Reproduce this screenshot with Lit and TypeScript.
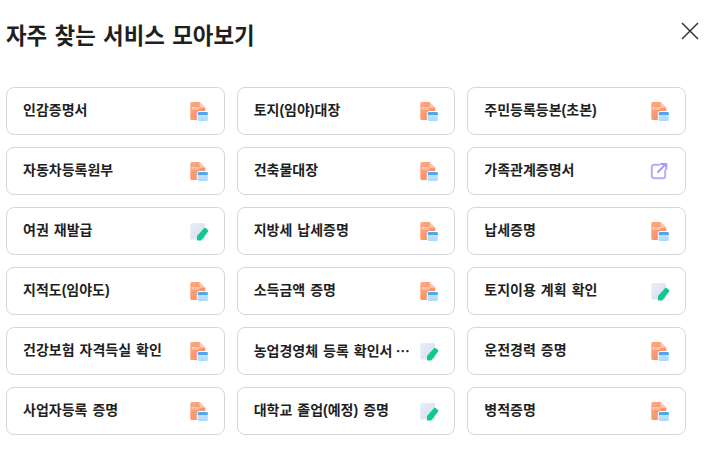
import { LitElement, html, css, svg } from 'lit';
import { customElement } from 'lit/decorators.js';

type Kind = 'pdf' | 'edit' | 'link';

const ITEMS: [string, Kind, boolean?][] = [
  ['인감증명서', 'pdf'],
  ['토지(임야)대장', 'pdf'],
  ['주민등록등본(초본)', 'pdf'],
  ['자동차등록원부', 'pdf'],
  ['건축물대장', 'pdf'],
  ['가족관계증명서', 'link'],
  ['여권 재발급', 'edit'],
  ['지방세 납세증명', 'pdf'],
  ['납세증명', 'pdf'],
  ['지적도(임야도)', 'pdf'],
  ['소득금액 증명', 'pdf'],
  ['토지이용 계획 확인', 'edit'],
  ['건강보험 자격득실 확인', 'pdf'],
  ['농업경영체 등록 확인서', 'edit', true],
  ['운전경력 증명', 'pdf'],
  ['사업자등록 증명', 'pdf'],
  ['대학교 졸업(예정) 증명', 'edit'],
  ['병적증명', 'pdf'],
];

const icons: Record<Kind, unknown> = {
  pdf: svg`
    <defs>
      <linearGradient id="doc" x1="0" y1="0" x2="1" y2="1">
        <stop offset="0" stop-color="#fdaa84"/>
        <stop offset="1" stop-color="#f9855a"/>
      </linearGradient>
      <linearGradient id="win" x1="0" y1="0" x2="0" y2="1">
        <stop offset="0" stop-color="#cdeafc"/>
        <stop offset="1" stop-color="#a5d8fb"/>
      </linearGradient>
    </defs>
    <path d="M1.300 2.500A1.500 1.500 0 0 1 2.800 1H10.500l5.800 5.800v10.700a1.500 1.500 0 0 1-1.500 1.500H2.800a1.500 1.500 0 0 1-1.500-1.500z" fill="url(#doc)"/>
    <path d="M10.500 1l5.800 5.800h-4.300a1.500 1.500 0 0 1-1.500-1.500z" fill="#fdc8ac"/>
    <text x="2.800" y="9" font-size="4" font-weight="700" fill="#ffe0d0" font-family="'Liberation Sans', sans-serif">PDF</text>
    <rect x="8.300" y="10.500" width="11" height="10" rx="1.800" fill="url(#win)" stroke="#fff" stroke-width="1"/>
    <path d="M8.800 12.300A1.300 1.300 0 0 1 10.100 11h7.400a1.300 1.300 0 0 1 1.300 1.300v1.700H8.800z" fill="#4fa8ee"/>`,
  edit: svg`
    <defs>
      <linearGradient id="paper" x1="0" y1="0" x2="1" y2="1">
        <stop offset="0" stop-color="#e9edf8"/>
        <stop offset="1" stop-color="#d6ddef"/>
      </linearGradient>
    </defs>
    <path d="M1.300 3.500A1.500 1.500 0 0 1 2.800 2h11.700A1.500 1.500 0 0 1 16 3.500V17a1.500 1.500 0 0 1-1.500 1.500H2.800A1.500 1.500 0 0 1 1.300 17z" fill="url(#paper)"/>
    <path d="M8 19.500V15L15 7.200a1.200 1.200 0 0 1 1.700-.1l2.200 2a1.200 1.200 0 0 1 .1 1.700L12.200 19.500z" fill="#10c98f"/>`,
  link: svg`
    <path d="M9.500 3.800H4.300A2.500 2.500 0 0 0 1.800 6.300V14.700A2.500 2.500 0 0 0 4.300 17.200h8.400a2.500 2.500 0 0 0 2.500-2.500V9.500" fill="none" stroke="#b9acf6" stroke-width="2" stroke-linecap="round"/>
    <path d="M8 11L15.500 3.300M11.300 3h5v5" fill="none" stroke="#ab9cf3" stroke-width="2" stroke-linecap="round" stroke-linejoin="round"/>`,
};

@customElement('app-root')
export class AppRoot extends LitElement {
  static styles = css`
    :host {
      display: block;
      box-sizing: border-box;
      width: 710px;
      height: 451px;
      padding: 0 24px 0 6px;
      background: #fff;
      color: #1f1f1f;
      font-family: 'Liberation Sans', 'Noto Sans CJK KR', sans-serif;
      word-spacing: 0.07em;
    }
    .head {
      display: flex;
      align-items: center;
      justify-content: space-between;
      height: 72px;
    }
    h2 {
      margin: 2px 0 0;
      font-size: 22.4px;
      font-weight: 700;
      line-height: 32px;
    }
    .close {
      display: block;
      width: 20px;
      height: 20px;
      margin: 0 -14px 10px 0;
    }
    .grid {
      display: grid;
      grid-template-columns: repeat(3, minmax(0, 1fr));
      gap: 12px;
      margin-top: 15px;
    }
    .card {
      box-sizing: border-box;
      display: flex;
      align-items: center;
      gap: 10px;
      height: 48px;
      padding: 0 15px 0 16px;
      border: 1px solid #d5d7dc;
      border-radius: 8px;
      background: #fff;
    }
    .label {
      flex: 1;
      min-width: 0;
      margin-bottom: 2px;
      white-space: nowrap;
      font-size: 14px;
      font-weight: 700;
      line-height: 20px;
    }
    .more {
      font-family: 'Noto Sans CJK KR', sans-serif;
      word-spacing: 0;
    }
    .icon {
      flex: none;
      width: 20px;
      height: 20px;
    }
  `;

  render() {
    return html`
      <div class="head">
        <h2>자주 찾는 서비스 모아보기</h2>
        <svg class="close" viewBox="0 0 20 20" aria-label="닫기">
          <path d="M2 2l16 16M18 2L2 18" stroke="#333" stroke-width="1.500" fill="none"/>
        </svg>
      </div>
      <div class="grid">
        ${ITEMS.map(([name, kind, more]) => html`
          <div class="card">
            <span class="label">${name}${more ? html`<span class="more"> …</span>` : ''}</span>
            <svg class="icon" viewBox="0 0 20 20">${icons[kind]}</svg>
          </div>
        `)}
      </div>
    `;
  }
}
